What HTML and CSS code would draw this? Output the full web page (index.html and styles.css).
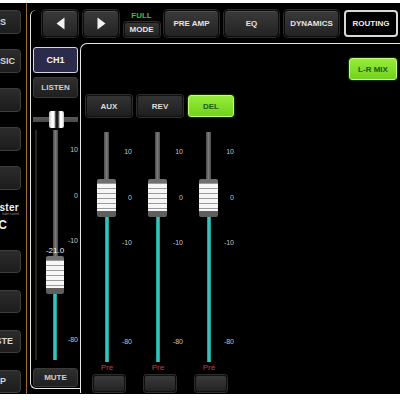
FILE: index.html
```html
<!DOCTYPE html>
<html lang="en">
<head>
    <meta charset="UTF-8">
    <meta name="viewport" content="width=device-width, initial-scale=1.0">
    <title>Mixer Routing</title>
    <link rel="stylesheet" href="styles.css">
</head>
<body>

    <div class="device">
        <!-- left scene column, partly off screen -->
        <aside class="side">
            <div class="side-group">
                <div class="side-btn tail">SCENES</div>
                <div class="side-btn">MUSIC</div>
                <div class="side-btn"></div>
                <div class="side-btn"></div>
                <div class="side-btn"></div>
            </div>
            <div class="logo">
                <div class="logo-name">Master</div>
                <div class="logo-tag">fader control</div>
                <div class="logo-mark">MAC</div>
            </div>
            <div class="side-group lower">
                <div class="side-btn"></div>
                <div class="side-btn"></div>
                <div class="side-btn mid">PASTE</div>
                <div class="side-btn tail">CLIP</div>
            </div>
        </aside>

        <div class="content">
            <nav class="topbar">
                <button class="nav-btn arrow">
                    <svg width="9" height="13" viewBox="0 0 9 13"><path d="M8.5 0.5V12.5L0.5 6.5Z" fill="#f2f2f2"/></svg>
                </button>
                <button class="nav-btn arrow">
                    <svg width="9" height="13" viewBox="0 0 9 13"><path d="M0.5 0.5V12.5L8.5 6.5Z" fill="#f2f2f2"/></svg>
                </button>
                <div class="mode">
                    <span class="mode-state">FULL</span>
                    <button class="mode-btn">MODE</button>
                </div>
                <button class="nav-btn tab">PRE AMP</button>
                <button class="nav-btn tab">EQ</button>
                <button class="nav-btn tab">DYNAMICS</button>
                <button class="nav-btn tab active">ROUTING</button>
            </nav>

            <!-- channel strip -->
            <section class="strip">
                <button class="ch-btn">CH1</button>
                <button class="strip-btn listen">LISTEN</button>

                <div class="pan">
                    <div class="pan-knob"></div>
                </div>

                <div class="fader">
                    <div class="meter"></div>
                    <div class="lane">
                        <div class="track" style="height: 126px"></div>
                        <div class="knob"><span class="knob-value">-21.0</span></div>
                        <div class="level"></div>
                    </div>
                    <div class="scale">
                        <span>10</span>
                        <span>0</span>
                        <span>-10</span>
                        <span>-80</span>
                    </div>
                </div>

                <button class="strip-btn mute">MUTE</button>
            </section>

            <!-- sends -->
            <section class="main">
                <div class="main-head">
                    <button class="green-btn lr">L-R MIX</button>
                </div>

                <div class="sends">
                    <div class="send">
                        <button class="send-btn">AUX</button>
                        <div class="fader">
                            <div class="lane">
                                <div class="track" style="height: 47px"></div>
                                <div class="knob"></div>
                                <div class="level"></div>
                            </div>
                            <div class="scale">
                                <span>10</span>
                                <span>0</span>
                                <span>-10</span>
                                <span>-80</span>
                            </div>
                        </div>
                        <div class="pre">Pre</div>
                        <button class="pre-btn"></button>
                    </div>

                    <div class="send">
                        <button class="send-btn">REV</button>
                        <div class="fader">
                            <div class="lane">
                                <div class="track" style="height: 47px"></div>
                                <div class="knob"></div>
                                <div class="level"></div>
                            </div>
                            <div class="scale">
                                <span>10</span>
                                <span>0</span>
                                <span>-10</span>
                                <span>-80</span>
                            </div>
                        </div>
                        <div class="pre">Pre</div>
                        <button class="pre-btn"></button>
                    </div>

                    <div class="send">
                        <button class="send-btn green-btn">DEL</button>
                        <div class="fader">
                            <div class="lane">
                                <div class="track" style="height: 47px"></div>
                                <div class="knob"></div>
                                <div class="level"></div>
                            </div>
                            <div class="scale">
                                <span>10</span>
                                <span>0</span>
                                <span>-10</span>
                                <span>-80</span>
                            </div>
                        </div>
                        <div class="pre">Pre</div>
                        <button class="pre-btn"></button>
                    </div>
                </div>
            </section>
        </div>
    </div>

</body>
</html>
```

FILE: styles.css
```css
body {
    margin: 0;
    padding: 3px 0 0;
    background-color: #ffffff;
    font-family: "Liberation Sans", Arial, sans-serif;
}
button {
    font-family: inherit;
    padding: 0;
    cursor: pointer;
}
.device {
    display: flex;
    height: 391px;
    background-color: #000;
    overflow: hidden;
}

/* left column */
.side {
    width: 26px;
    flex-shrink: 0;
    border-right: 1px solid #a0683a;
    overflow: hidden;
    padding-top: 7px;
}
.side-group {
    display: flex;
    flex-direction: column;
    gap: 15px;
}
.side-group.lower {
    gap: 17px;
    margin-top: 19px;
}
.side-btn {
    width: 60px;
    height: 24px;
    margin-left: -39px;
    box-sizing: border-box;
    background: linear-gradient(#2c2c2c, #1c1c1c);
    border: 1px solid #3e3e3e;
    border-radius: 4px;
    color: #d6d6d6;
    font-size: 9px;
    font-weight: bold;
    line-height: 22px;
    text-align: right;
    padding-right: 5px;
    white-space: nowrap;
    overflow: hidden;
}
.side-group.lower .side-btn {
    height: 23px;
    line-height: 21px;
}
.side-btn.mid {
    padding-right: 7px;
}
.side-btn.tail {
    padding-right: 14px;
}
.logo {
    margin-top: 13px;
    text-align: right;
    color: #f0f0f0;
    white-space: nowrap;
}
.logo-name {
    margin-left: -40px;
    padding-right: 7px;
    font-size: 10px;
    line-height: 9px;
    font-weight: bold;
    letter-spacing: 0.3px;
}
.logo-tag {
    margin-left: -40px;
    padding-right: 7px;
    font-size: 3px;
    line-height: 4px;
    color: #9a9a9a;
}
.logo-mark {
    margin-left: -40px;
    padding-right: 19px;
    margin-top: 4px;
    font-size: 12px;
    line-height: 11px;
    font-weight: bold;
}

/* main area */
.content {
    flex: 1;
    display: grid;
    grid-template-columns: 50px 1fr;
    grid-template-rows: 33px 1fr;
    margin: 7px 0 1px 3px;
}
.topbar {
    grid-column: 1 / 3;
    grid-row: 1;
    display: flex;
    gap: 5px;
    padding-left: 12px;
    align-items: flex-start;
}
.nav-btn {
    height: 27px;
    display: flex;
    align-items: center;
    justify-content: center;
    box-sizing: border-box;
    background: linear-gradient(#3a3a3a, #232323);
    border: 1px solid #0c0c0c;
    border-radius: 4px;
    box-shadow: inset 0 1px 0 rgba(255, 255, 255, 0.12), 0 0 0 1px #2a2a2a;
    color: #e4e4e4;
    font-size: 8px;
    font-weight: bold;
}
.nav-btn.arrow {
    width: 36px;
}
.nav-btn.tab {
    width: 55px;
}
.nav-btn.active {
    width: 54px;
    background: #000;
    border: 2px solid #d8d8d8;
    box-shadow: none;
    color: #f0f0f0;
}
.mode {
    width: 35px;
    display: flex;
    flex-direction: column;
    align-items: center;
}
.mode-state {
    color: #3fbf35;
    font-size: 8px;
    font-weight: bold;
    line-height: 12px;
}
.mode-btn {
    width: 36px;
    height: 15px;
    background: linear-gradient(#353535, #222);
    border: 1px solid #111;
    border-radius: 3px;
    box-shadow: 0 0 0 1px #2c2c2c;
    color: #e4e4e4;
    font-size: 8px;
    font-weight: bold;
}

/* channel strip */
.strip {
    grid-column: 1;
    grid-row: 1 / 3;
    border-left: 1px solid #e6e6e6;
    border-bottom: 1px solid #e6e6e6;
    border-radius: 6px 0 0 6px;
    margin-bottom: 4px;
    padding: 37px 0 0 2px;
    display: flex;
    flex-direction: column;
}
.ch-btn {
    width: 45px;
    height: 26px;
    background-color: #2c2b4b;
    border: 1.5px solid #d4d4e4;
    border-radius: 3px;
    color: #f4f4f4;
    font-size: 9px;
    font-weight: bold;
}
.strip-btn {
    width: 45px;
    background: linear-gradient(#2f2f2f, #1f1f1f);
    border: 1px solid #3a3a3a;
    border-radius: 3px;
    color: #cfcfcf;
    font-size: 8px;
    font-weight: bold;
}
.listen {
    height: 21px;
    margin-top: 4px;
}
.mute {
    height: 19px;
    margin-top: 8px;
}
.pan {
    width: 45px;
    height: 17px;
    margin-top: 13px;
    display: flex;
    justify-content: center;
    background: linear-gradient(transparent 6px, #5a5a5a 6px, #4a4a4a 11px, transparent 11px);
}
.pan-knob {
    width: 15px;
    margin-left: 1px;
    background: linear-gradient(90deg, #bdbdbd, #fff 3px, #fff 5px, #8a8a8a 6px, #1a1a1a 7px, #1a1a1a 9px, #8a8a8a 10px, #fff 11px, #fff 13px, #bdbdbd);
    border-radius: 2px;
}

/* faders */
.fader {
    display: flex;
    height: 230px;
}
.strip .fader {
    margin-top: 2px;
}
.meter {
    width: 2px;
    margin-left: 2px;
    background-color: #262626;
}
.lane {
    width: 18px;
    display: flex;
    flex-direction: column;
    align-items: center;
}
.strip .lane {
    margin-left: 9px;
}
.send .lane {
    width: 19px;
    margin-left: 11px;
}
.track {
    width: 5px;
    flex-shrink: 0;
    background: linear-gradient(90deg, #4a4a4a, #7a7a7a, #4a4a4a);
}
.knob {
    position: relative;
    width: 100%;
    height: 38px;
    flex-shrink: 0;
    border-radius: 2px;
    background:
        linear-gradient(#707070 0 4px, transparent 4px calc(100% - 6px), #5e5e5e calc(100% - 6px)),
        repeating-linear-gradient(#f6f6f6 0 4px, #9a9a9a 4px 5px);
}
.knob-value {
    position: absolute;
    left: -6px;
    right: -6px;
    bottom: 100%;
    margin-bottom: 1px;
    text-align: center;
    color: #f2f2f2;
    font-size: 8px;
    line-height: 8px;
}
.level {
    flex: 1;
    width: 4px;
    background: linear-gradient(90deg, #128e8c, #45d3cf, #128e8c);
}
.scale {
    width: 14px;
    display: flex;
    flex-direction: column;
    align-items: flex-end;
    padding-top: 16px;
    color: #c4c4c4;
    font-size: 7px;
    line-height: 8px;
}
.send .scale {
    width: 16px;
}
.scale span:nth-child(2) {
    margin-top: 38px;
}
.scale span:nth-child(3) {
    margin-top: 37px;
}
.scale span:nth-child(4) {
    margin-top: 91px;
}

/* sends */
.main {
    grid-column: 2;
    grid-row: 2;
    border-top: 1px solid #e6e6e6;
    border-left: 1px solid #e6e6e6;
    border-top-left-radius: 7px;
    padding: 14px 3px 0 5px;
}
.main-head {
    display: flex;
    justify-content: flex-end;
}
.green-btn {
    background: linear-gradient(#95ec3a, #72d21e);
    border: 1px solid #c4ff7a;
    border-radius: 3px;
    box-shadow: 0 0 2px #5aa01c;
    color: #1f5a10;
    font-size: 8px;
    font-weight: bold;
}
.lr {
    width: 48px;
    height: 22px;
}
.sends {
    display: flex;
    margin-top: 15px;
}
.send {
    width: 51px;
    display: flex;
    flex-direction: column;
}
.send-btn {
    width: 46px;
    height: 22px;
    margin-bottom: 15px;
}
.send-btn:not(.green-btn) {
    background: linear-gradient(#333, #1f1f1f);
    border: 1px solid #111;
    border-radius: 3px;
    box-shadow: 0 0 0 1px #2e2e2e;
    color: #dcdcdc;
    font-size: 8px;
    font-weight: bold;
}
.pre {
    width: 42px;
    margin-top: 1px;
    text-align: center;
    color: #d2392e;
    font-size: 8px;
    line-height: 10px;
}
.pre-btn {
    width: 32px;
    height: 17px;
    margin: 2px 0 0 7px;
    background: linear-gradient(#3a3a3a, #242424);
    border: 1px solid #111;
    border-radius: 3px;
    box-shadow: 0 0 0 1px #2c2c2c;
}
```
